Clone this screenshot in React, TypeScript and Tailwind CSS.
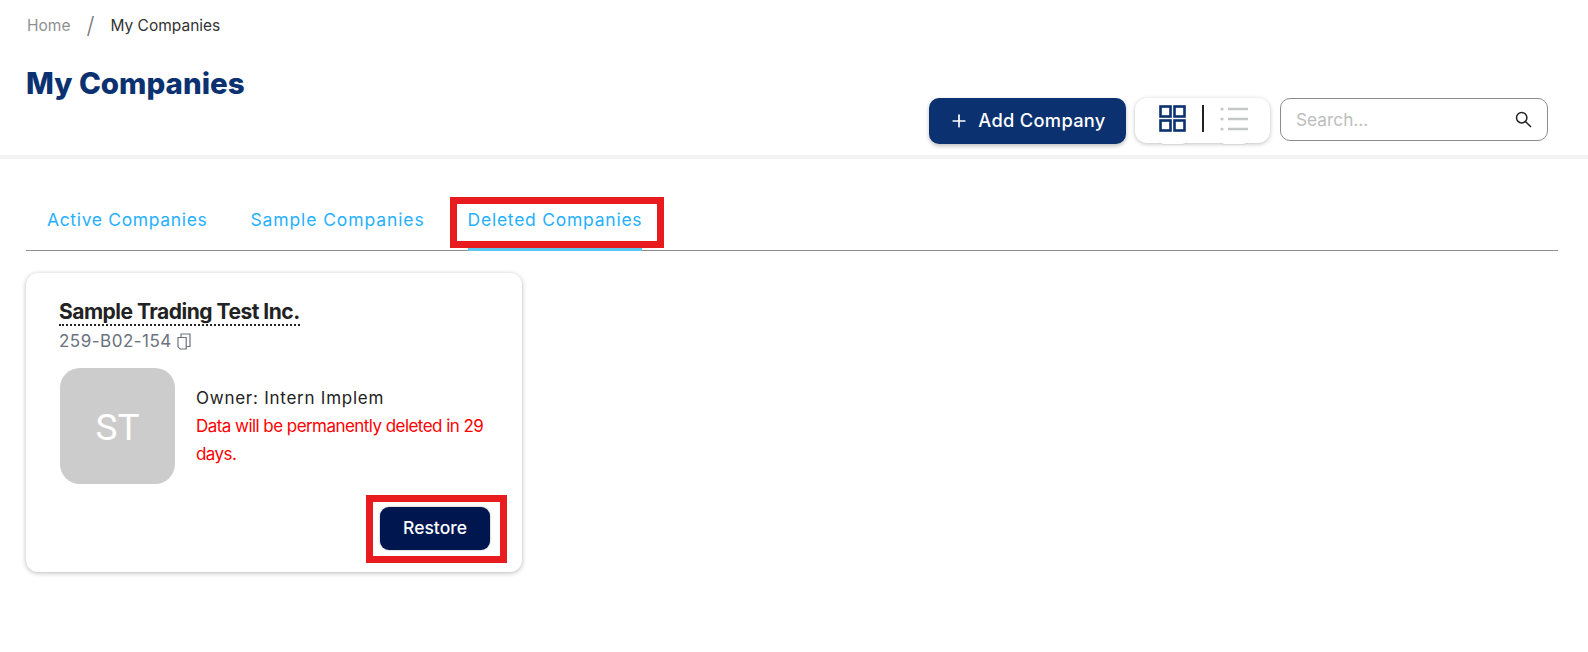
import { Plus } from "lucide-react"

const font = { fontFamily: '"Inter", "Liberation Sans", sans-serif' }

function GridIcon() {
  return (
    <svg width="27" height="27" viewBox="0 0 27 27" fill="none" stroke="#0b3170" strokeWidth="2.6">
      <rect x="1.5" y="1.5" width="10" height="10" />
      <rect x="15.5" y="1.5" width="10" height="10" />
      <rect x="1.5" y="15.5" width="10" height="10" />
      <rect x="15.5" y="15.5" width="10" height="10" />
    </svg>
  )
}

function ListIcon() {
  return (
    <svg width="28" height="26" viewBox="0 0 28 26" fill="none" stroke="#c4c8c4" strokeWidth="2.6">
      <path d="M8 3h20M8 13h20M8 23h20" />
      <circle cx="2" cy="3" r="1.6" fill="#c4c8c4" stroke="none" />
      <circle cx="2" cy="13" r="1.6" fill="#c4c8c4" stroke="none" />
      <circle cx="2" cy="23" r="1.6" fill="#c4c8c4" stroke="none" />
    </svg>
  )
}

function SearchIcon() {
  return (
    <svg width="17" height="17" viewBox="0 0 17 17" fill="none" stroke="#222" strokeWidth="1.5">
      <circle cx="6.7" cy="6.7" r="5.2" />
      <path d="M10.5 10.5 16 16" />
    </svg>
  )
}

function CopyIcon() {
  return (
    <svg width="14" height="17" viewBox="0 0 14 17" fill="none" stroke="#6b7280" strokeWidth="1.2">
      <path d="M1 4.5h8.2v11.5H3.2L1 13.8z" />
      <path d="M4 4.5V1h9v12.5H9.2" />
    </svg>
  )
}

function Toolbar() {
  return (
    <div className="flex items-start pt-[98px]">
      <button className="flex h-[46px] w-[197px] items-center justify-center gap-[9px] rounded-[10px] bg-[#0b3170] text-[18.3px] font-medium tracking-[0.3px] text-white shadow-[0_2px_4px_rgba(0,0,0,0.25)]">
        <Plus size={20} strokeWidth={2} />
        Add Company
      </button>
      <div className="relative ml-[9px] flex h-[45px] w-[135px] items-center justify-center gap-[16px] rounded-[12px] bg-white pb-[4px] pl-[2px] shadow-[0_1px_4px_rgba(0,0,0,0.25)]">
        <span className="absolute -bottom-[1px] left-[23px] h-[6px] w-[30px] rounded-b-full bg-white shadow-[0_1px_1px_rgba(0,0,0,0.06)]" />
        <span className="absolute -bottom-[1px] left-[84px] h-[6px] w-[30px] rounded-b-full bg-white shadow-[0_1px_1px_rgba(0,0,0,0.06)]" />
        <GridIcon />
        <span className="h-[27px] w-[2px] bg-[#222]" />
        <ListIcon />
      </div>
      <div className="ml-[10px] flex h-[43px] w-[268px] items-center justify-between rounded-[10px] border border-[#8c8c8c] bg-white pl-[15px] pr-[15px]">
        <span className="text-[17.3px] text-[#bdbdbd]">Search...</span>
        <SearchIcon />
      </div>
    </div>
  )
}

function Tabs() {
  return (
    <div className="ml-[26px] mr-[30px] mt-[38px] flex h-[54px] gap-[43px] border-b border-[#8c8c8c] pl-[21px] text-[17.5px] tracking-[0.65px] text-[#26b0ff]">
      <span className="pt-[10px]">Active Companies</span>
      <span className="pt-[10px] tracking-[0.9px]">Sample Companies</span>
      <span className="relative h-[54px] border-b-[3px] border-[#5cc8f2] pt-[10px] tracking-[0.75px]">
        Deleted Companies
        <span className="absolute -left-[18px] -right-[22px] top-0 h-[51px] border-[7px] border-[#e81c1f]" />
      </span>
    </div>
  )
}

function CompanyCard() {
  return (
    <div className="ml-[26px] mt-[22px] h-[299px] w-[496px] rounded-[12px] bg-white pl-[33px] pr-[26px] pt-[26px] shadow-[0_1px_5px_rgba(0,0,0,0.28)]">
      <div className="w-fit border-b-2 border-dotted border-[#222] text-[21px] font-bold leading-[25px] tracking-[-0.5px] text-[#222]">
        Sample Trading Test Inc.
      </div>
      <div className="mt-[3px] flex items-center gap-[5px] text-[17px] leading-[24px] tracking-[0.5px] text-[#6b7280]">
        259-B02-154
        <CopyIcon />
      </div>
      <div className="mt-[15px] flex gap-[21px] pl-[1px]">
        <div
          className="flex h-[116px] w-[115px] shrink-0 items-center justify-center rounded-[20px] bg-[#cccccc] pt-[3px] text-[37px] text-white"
          style={{ fontFamily: '"Roboto", sans-serif' }}
        >
          ST
        </div>
        <div className="pt-[17px]">
          <div className="text-[17px] leading-[26px] tracking-[0.75px] text-[#222]">Owner: Intern Implem</div>
          <div className="mt-[1px] text-[17px] leading-[28px] tracking-[-0.55px] text-[#ff0000]">
            Data will be permanently deleted in 29 days.
          </div>
        </div>
      </div>
      <div className="mt-[11px] flex justify-end">
        <div className="-mr-[11px] border-[7px] border-[#e81c1f] pb-[6px] pl-[7px] pr-[10px] pt-[5px]">
          <button className="flex h-[43px] w-[110px] items-center justify-center rounded-[9px] bg-[#00164f] text-[17.5px] font-medium text-white shadow-[0_0_2px_rgba(0,0,0,0.4)]">
            Restore
          </button>
        </div>
      </div>
    </div>
  )
}

export default function App() {
  return (
    <div className="h-[652px] w-[1588px] overflow-hidden bg-white" style={font}>
      <header className="flex h-[159px] items-start justify-between border-b-4 border-[#f3f3f3] pl-[26px] pr-[40px]">
        <div>
          <nav className="flex items-center pl-[1px] pt-[12px] text-[15.5px] leading-[28px]">
            <span className="text-[#8f8f8f]">Home</span>
            <span className="mx-[16px] text-[23px] font-light text-[#777]">/</span>
            <span className="text-[#333]">My Companies</span>
          </nav>
          <h1 className="mt-[23px] text-[29.5px] font-extrabold leading-[40px] text-[#0b3170]">My Companies</h1>
        </div>
        <Toolbar />
      </header>
      <Tabs />
      <CompanyCard />
    </div>
  )
}
